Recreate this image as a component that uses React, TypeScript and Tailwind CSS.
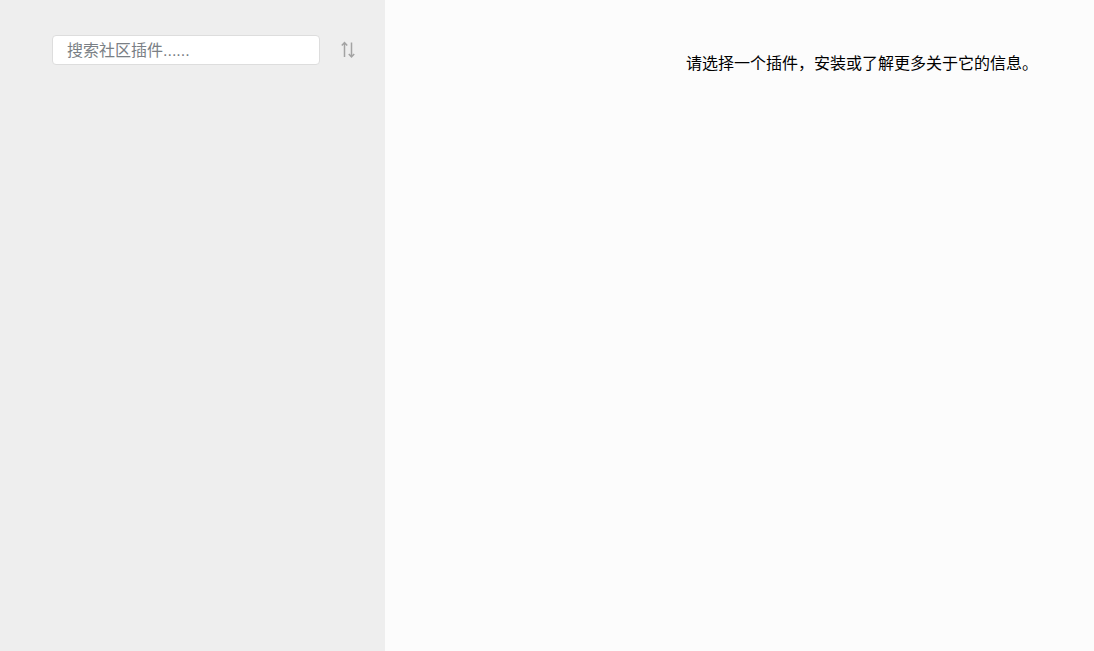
import React from "react";

const App: React.FC = () => {
  return (
    <div className="flex h-[651px] w-full overflow-hidden font-['Liberation_Sans','Noto_Sans_CJK_SC',sans-serif] text-[16px]">
      {/* Sidebar */}
      <div className="w-[385px] shrink-0 bg-[#eeeeee] pt-[35px] pl-[52px]">
        <div className="flex items-center">
          <input
            type="text"
            placeholder="搜索社区插件......"
            className="h-[30px] w-[268px] rounded-[4px] border border-[#dddddd] bg-white pt-[2px] pr-[14px] pl-[14px] text-[16px] outline-none placeholder:text-[#7a7f85]"
          />
          <button className="ml-[19px] flex h-[30px] w-[18px] items-center justify-center text-[#a3a3a3]">
            <svg
              width="18"
              height="18"
              viewBox="0 0 18 18"
              fill="none"
              stroke="currentColor"
              strokeWidth="1.5"
            >
              <path d="M5.5 16V1.5M2.8 4.5L5.5 1.5L8.2 4.5" />
              <path d="M12.5 1.5V16M9.8 13L12.5 16L15.2 13" />
            </svg>
          </button>
        </div>
      </div>

      {/* Details */}
      <div className="flex-1 bg-[#fcfcfc] pt-[53px] pr-[56px] text-right text-black">
        <p className="leading-[22px]">请选择一个插件，安装或了解更多关于它的信息。</p>
      </div>
    </div>
  );
};

export default App;
